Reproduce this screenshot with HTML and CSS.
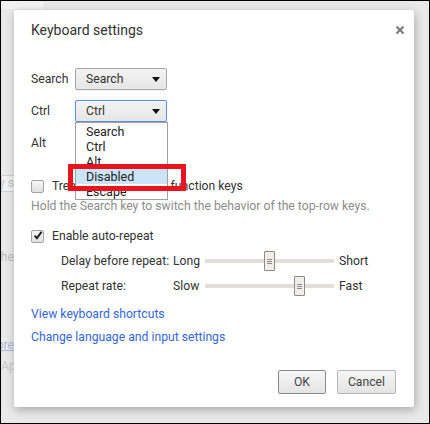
FILE: index.html
```html
<!DOCTYPE html>
<html>
<head>
<meta charset="utf-8">
<link rel="stylesheet" href="styles.css">
</head>
<body>
<div class="frame">
  <div class="page">
    <div class="page-top"><div class="page-tab"></div></div>
    <div class="page-col">
      <div class="frag frag-input"><span>Search key to type any s</span></div>
      <div class="frag frag-text1"><span>to switch the</span></div>
      <div class="frag frag-link"><span>Learn more</span></div>
      <div class="frag frag-text2"><span>Ap</span></div>
    </div>
  </div>

  <div class="dialog">
    <div class="dlg-head">
      <h1 class="dlg-title">Keyboard settings</h1>
      <button class="close" aria-label="Close">
        <svg width="10" height="10" viewBox="0 0 10 10"><path d="M1.5 1.5 L8.5 8.5 M8.5 1.5 L1.5 8.5" stroke="#7a7a7a" stroke-width="2"/></svg>
      </button>
    </div>

    <div class="keymap">
      <span class="key-label">Search</span>
      <div class="select"><span>Search</span><svg class="caret" width="8" height="5" viewBox="0 0 8 5"><path d="M0 0 H8 L4 5 Z" fill="#111"/></svg></div>
      <span class="key-label">Ctrl</span>
      <div class="select focused"><span>Ctrl</span><svg class="caret" width="8" height="5" viewBox="0 0 8 5"><path d="M0 0 H8 L4 5 Z" fill="#111"/></svg></div>
      <span class="key-label">Alt</span>
      <div class="select"><span>Alt</span><svg class="caret" width="8" height="5" viewBox="0 0 8 5"><path d="M0 0 H8 L4 5 Z" fill="#111"/></svg></div>
    </div>

    <label class="check-row">
      <span class="checkbox"></span>
      <span class="check-text">Treat top-row keys as function keys</span>
    </label>
    <p class="hint">Hold the Search key to switch the behavior of the top-row keys.</p>

    <label class="check-row check-row-2">
      <span class="checkbox"><svg width="11" height="11" viewBox="0 0 11 11"><path d="M1.8 5.6 L4.3 8.4 L9.4 1.6" fill="none" stroke="#222" stroke-width="2.2"/></svg></span>
      <span class="check-text">Enable auto-repeat</span>
    </label>

    <div class="repeat">
      <span>Delay before repeat:</span>
      <span>Long</span>
      <div class="slider"><div class="track"></div><div class="thumb" style="left:59px"><i></i><i></i><i></i></div></div>
      <span class="max">Short</span>
      <span>Repeat rate:</span>
      <span>Slow</span>
      <div class="slider"><div class="track"></div><div class="thumb" style="left:89px"><i></i><i></i><i></i></div></div>
      <span class="max">Fast</span>
    </div>

    <a class="link link-1" href="#">View keyboard shortcuts</a>
    <a class="link link-2" href="#">Change language and input settings</a>

    <div class="actions">
      <button class="btn btn-default">OK</button>
      <button class="btn">Cancel</button>
    </div>

    <ul class="dropdown">
      <li>Search</li>
      <li>Ctrl</li>
      <li>Alt</li>
      <li class="active">Disabled</li>
      <li>Escape</li>
    </ul>
    <div class="callout"></div>
  </div>
</div>
</body>
</html>
```

FILE: styles.css
```css
* { box-sizing: border-box; }
html, body { margin: 0; padding: 0; }
body {
  font-family: Roboto, "Noto Sans", "Liberation Sans", sans-serif;
  font-size: 12.2px;
  color: #333;
  background: #ffffff;
}
.frame {
  position: relative;
  width: 430px;
  height: 424px;
  border: 1px solid #000;
  background: #e9e9e9;
  overflow: hidden;
}

/* backdrop page */
.page { display: flex; flex-direction: column; }
.page-top { height: 8px; display: flex; }
.page-tab { width: 42px; height: 8px; background: #f1f1f1; }
.page-col { width: 13px; display: flex; flex-direction: column; overflow: hidden; }
.frag { display: flex; justify-content: flex-end; white-space: nowrap; overflow: hidden; line-height: 16px; height: 16px; color: #bdbdbd; }
.frag-input {
  margin-top: 166px; height: 17px; line-height: 15px;
  border: 1px solid #d2d2d2; border-right: 0;
  background: #f1f1f1; color: #c4c4c4;
}
.frag-text1 { margin-top: 57px; }
.frag-link { margin-top: 72px; color: #a9b9da; text-decoration: underline; }
.frag-text2 { margin-top: 5px; justify-content: flex-start; color: #c9c9c9; }

/* dialog */
.dialog {
  position: absolute;
  left: 13px;
  top: 9px;
  width: 400px;
  height: 397px;
  background: #fff;
  border-radius: 2px;
  box-shadow: 1px 3px 10px rgba(0,0,0,0.28);
  padding: 11px 18px 13px 17px;
  display: flex;
  flex-direction: column;
  white-space: nowrap;
}
.dlg-head { display: flex; justify-content: space-between; align-items: center; height: 18px; margin-right: -9px; }
.dlg-title { margin: 0; font-size: 14px; font-weight: 400; line-height: 18px; color: #333; }
.close { border: 0; background: none; padding: 0; width: 10px; height: 10px; display: flex; }

.keymap {
  margin-top: 29px;
  display: grid;
  grid-template-columns: 44px 92px;
  grid-auto-rows: 22px;
  row-gap: 10px;
  align-items: center;
}
.select {
  height: 22px;
  border: 1px solid #a6a6a6;
  border-radius: 2px;
  background: linear-gradient(#f3f3f3, #e6e6e6);
  display: flex;
  align-items: center;
  justify-content: space-between;
  padding: 0 6px 0 10px;
  color: #333;
  box-shadow: 0 1px 0 rgba(0,0,0,0.06);
}
.select.focused { border-color: #5b8ee6; }
.caret { display: block; }

.check-row { display: flex; align-items: center; height: 18px; gap: 8px; }
.check-row { margin-top: 23px; }
.check-row-2 { margin-top: 13px; }
.checkbox {
  width: 13px; height: 13px;
  border: 1px solid #a3a3a3;
  border-radius: 2px;
  background: linear-gradient(#f7f7f7, #e0e0e0);
  display: flex; align-items: center; justify-content: center;
}
.checkbox svg { display: block; margin-left: 1px; margin-top: -1px; }
.check-text { color: #333; }
.hint { margin: 3px 0 0; line-height: 16px; color: #8c8c8c; }

.repeat {
  margin: 6px 0 0 30px;
  display: grid;
  grid-template-columns: 112px 32px 129px auto;
  grid-auto-rows: 20px;
  row-gap: 5px;
  align-items: center;
}
.slider { position: relative; height: 20px; display: flex; align-items: center; }
.track { width: 100%; height: 4px; background: #e3dfd8; }
.thumb {
  position: absolute; top: 0;
  width: 11px; height: 20px;
  border: 1px solid #8f8a84;
  border-radius: 1px;
  background: #f0eeea;
  display: flex; flex-direction: column; align-items: center; justify-content: center; gap: 1px;
}
.thumb i { display: block; width: 5px; height: 1px; background: #8f8a84; }
.max { margin-left: 5px; }

.link { color: #3367d6; text-decoration: none; line-height: 16px; align-self: flex-start; }
.link-1 { margin-top: 10px; }
.link-2 { margin-top: 7px; }

.actions { margin-top: auto; display: flex; justify-content: flex-end; gap: 11px; }
.btn {
  font-family: inherit; font-size: 12.2px; color: #444;
  height: 24px; padding: 0;
  border: 1px solid #b5b5b5; border-radius: 2px;
  background: linear-gradient(#f6f6f6, #e4e4e4);
}
.btn-default { width: 48px; border-color: #8a8a8a; }
.btn:not(.btn-default) { width: 59px; }

/* open select popup */
.dropdown {
  position: absolute;
  left: 61px; top: 112px;
  width: 93px; height: 78px;
  margin: 0; padding: 1px 0;
  list-style: none;
  background: #fff;
  border: 1px solid #a0a0a0;
}
.dropdown li { height: 15px; line-height: 15px; padding-left: 10px; color: #222; font-size: 12.5px; }
.dropdown li.active { background: #cce4f7; }

.callout {
  position: absolute;
  left: 54px; top: 154px;
  width: 118px; height: 27px;
  border: 5px solid #e8141e;
}
```
